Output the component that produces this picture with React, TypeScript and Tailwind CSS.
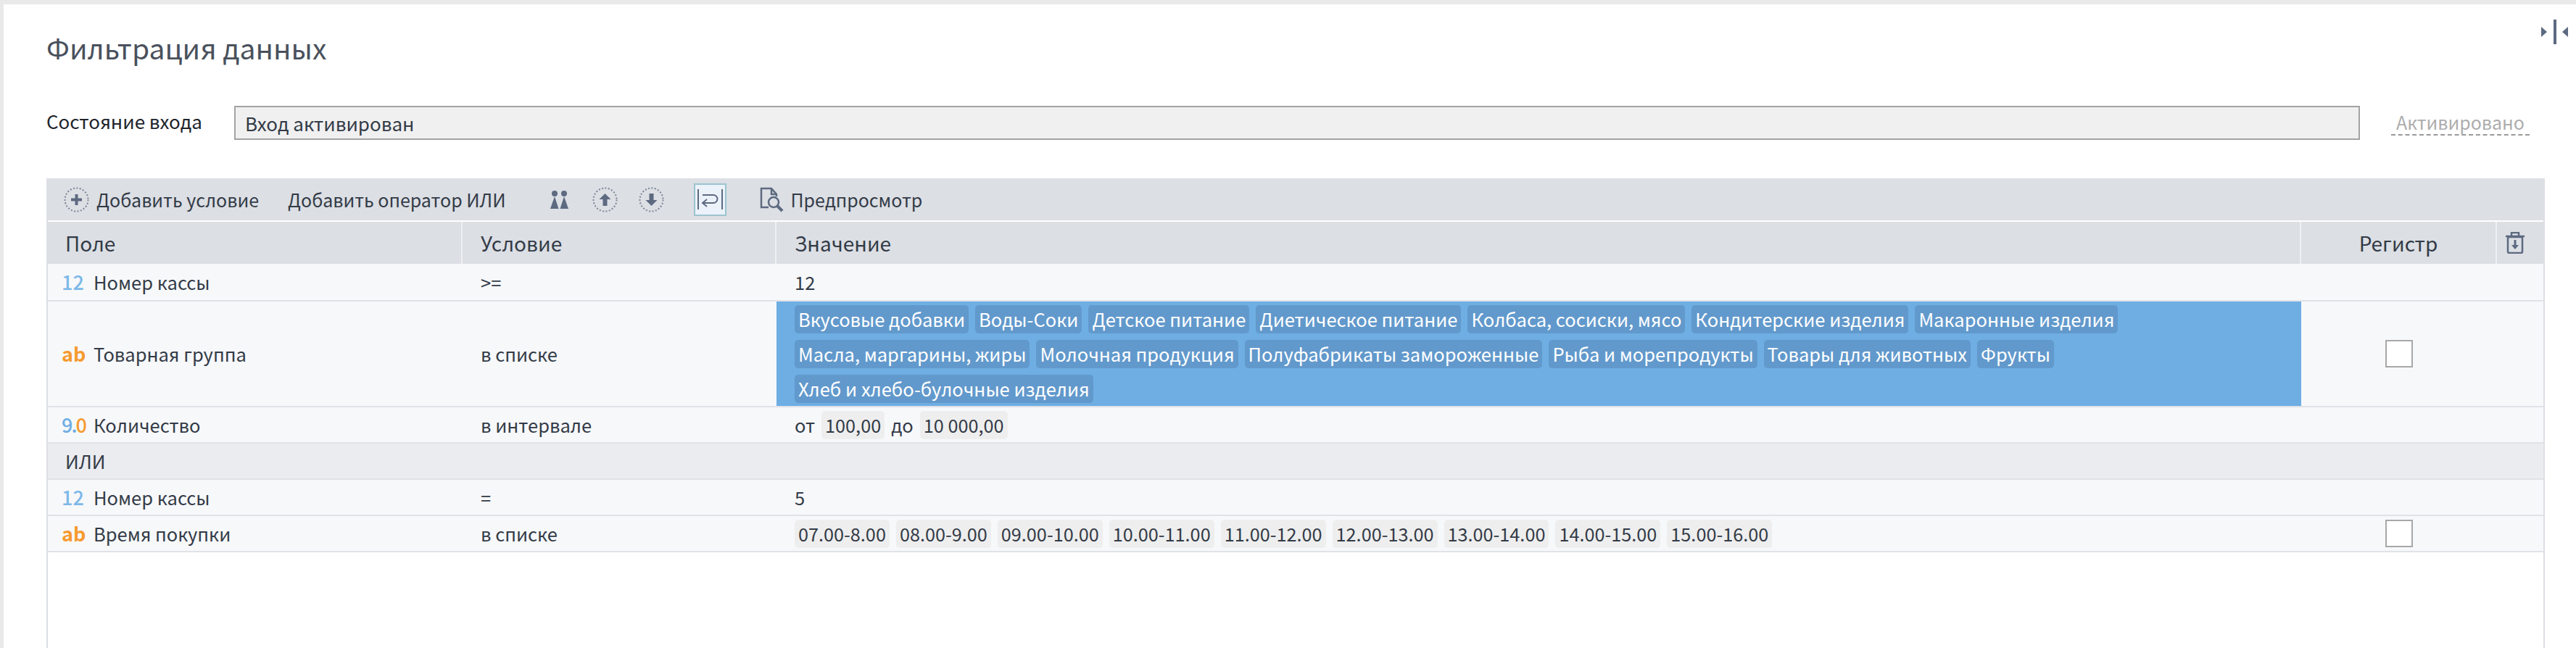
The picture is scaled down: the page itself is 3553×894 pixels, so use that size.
const font = { fontFamily: '"Noto Sans CJK SC", "Noto Sans", sans-serif' };

function Tag({ children, blue }: { children: React.ReactNode; blue?: boolean }) {
  return (
    <span className={"inline-flex h-[39px] items-center rounded-[5px] px-[5px] " + (blue ? "bg-[#6299cc] text-white" : "bg-[#eeeeee] text-[25.25px] text-[#333b47]")}>
      {children}
    </span>
  );
}

function DottedCircle({ children }: { children: React.ReactNode }) {
  return (
    <svg width="35" height="35" viewBox="0 0 35 35" className="shrink-0">
      <circle cx="17.5" cy="17.5" r="16" fill="none" stroke="#7d8797" strokeWidth="2" strokeDasharray="2 2.4" />
      {children}
    </svg>
  );
}

const ink = "#5d6a80";

function Toolbar() {
  return (
    <div className="flex h-[58px] items-center bg-[#dcdfe4] pl-[24px] text-[25px] text-[#333b47]">
      <DottedCircle>
        <path d="M17.5 10v15M10 17.5h15" stroke={ink} strokeWidth="4" />
      </DottedCircle>
      <span className="ml-[10px]">Добавить условие</span>
      <span className="ml-[40px]">Добавить оператор ИЛИ</span>
      <svg width="25" height="25" viewBox="0 0 25 25" className="ml-[61px] shrink-0">
        <circle cx="6" cy="4" r="4" fill={ink} />
        <circle cx="19" cy="4" r="4" fill={ink} />
        <path d="M6 8l5.500 17H0zM19 8l6 17H13.500z" fill={ink} />
      </svg>
      <div className="ml-[33px]">
        <DottedCircle>
          <path d="M17.5 9l8 8h-5v9h-6v-9h-5z" fill={ink} />
        </DottedCircle>
      </div>
      <div className="ml-[29px]">
        <DottedCircle>
          <path d="M17.5 26l-8-8h5V9h6v9h5z" fill={ink} />
        </DottedCircle>
      </div>
      <div className="ml-[41px] flex h-[45px] w-[45px] items-center justify-center border-2 border-[#9cc4cf] bg-[#ebf2fa]">
        <svg width="37" height="32" viewBox="0 0 37 32">
          <path d="M2 2v28M35 2v28" stroke={ink} strokeWidth="2" />
          <path d="M8 10h15a5.500 5.500 0 0 1 0 11H9M14 16l-6 5 6 5" fill="none" stroke={ink} strokeWidth="2" />
        </svg>
      </div>
      <svg width="33" height="35" viewBox="0 0 33 35" className="ml-[46px] shrink-0">
        <path d="M12 28H2V2h14l7 8v3M16 2v8h7" fill="none" stroke={ink} strokeWidth="2.500" />
        <circle cx="19" cy="21" r="7" fill="none" stroke={ink} strokeWidth="2.500" />
        <path d="M24 26l7 7" stroke={ink} strokeWidth="4" />
      </svg>
      <span className="ml-[10px]">Предпросмотр</span>
    </div>
  );
}

const cols = "grid grid-cols-[572px_433px_2103px_270px_64px]";

function Header() {
  const cell = "flex h-full items-center border-r-2 border-[#eef0f2]";
  return (
    <div className={cols + " h-[58px] bg-[#dcdfe4] mt-[2px] pl-[2px] text-[28px] text-[#333b47]"}>
      <div className={cell + " pl-[24px]"}>Поле</div>
      <div className={cell + " pl-[25px]"}>Условие</div>
      <div className={cell + " pl-[25px]"}>Значение</div>
      <div className={cell + " justify-center"}>Регистр</div>
      <div className="flex items-center pl-[12px]">
        <svg width="26" height="30" viewBox="0 0 26 30">
          <path d="M0 6h26M8 5V1h10v4" fill="none" stroke={ink} strokeWidth="2.500" />
          <rect x="3" y="7" width="20" height="22" rx="2" fill="none" stroke={ink} strokeWidth="2.500" />
          <path d="M13 11v9" stroke={ink} strokeWidth="3" />
          <path d="M8 18h10l-5 6z" fill={ink} />
        </svg>
      </div>
    </div>
  );
}

function TypeBadge({ t }: { t: string }) {
  if (t === "12") return <span className="w-[44px] text-[27px] font-medium text-[#7db8e8]">12</span>;
  if (t === "ab") return <span className="w-[44px] text-[27px] font-bold text-[#f59a2f]">ab</span>;
  return (
    <span className="w-[44px] text-[27px] font-medium tracking-[-2px] text-[#6eaee3]">
      9.<span className="text-[#f59a2f]">0</span>
    </span>
  );
}

function Row({ t, name, cond, h, children, check, valueClass }: { t: string; name: string; cond: string; h: string; children?: React.ReactNode; check?: boolean; valueClass?: string }) {
  return (
    <div className={cols + " " + h + " box-content border-b-2 border-[#e0e2e7] bg-[#f7f8fa] text-[#333b47]"}>
      <div className="flex items-center pl-[19px]">
        <TypeBadge t={t} />
        <span>{name}</span>
      </div>
      <div className="flex items-center pl-[25px]">{cond}</div>
      <div className={valueClass ?? "flex items-center gap-[9px] pl-[25px]"}>{children}</div>
      <div className="flex items-center justify-center">
        {check && <span className="box-border block h-[38px] w-[38px] border-2 border-[#a8a8a8] bg-white" />}
      </div>
      <div />
    </div>
  );
}

const groups = [
  ["Вкусовые добавки", "Воды-Соки", "Детское питание", "Диетическое питание", "Колбаса, сосиски, мясо", "Кондитерские изделия", "Макаронные изделия"],
  ["Масла, маргарины, жиры", "Молочная продукция", "Полуфабрикаты замороженные", "Рыба и морепродукты", "Товары для животных", "Фрукты"],
  ["Хлеб и хлебо-булочные изделия"],
];

const times = ["07.00-8.00", "08.00-9.00", "09.00-10.00", "10.00-11.00", "11.00-12.00", "12.00-13.00", "13.00-14.00", "14.00-15.00", "15.00-16.00"];

export default function App() {
  return (
    <div style={font} className="flex h-[894px] w-[3553px] flex-col overflow-hidden border-l-[5px] border-t-[6px] border-[#e9e9e9] bg-white text-[25.5px] leading-[34px]">
      <div className="relative flex flex-col pl-[59px] pr-[44px]">
        <h1 className="mt-[36px] h-[51px] text-[39px] leading-[46px] font-normal text-[#4a515c]">Фильтрация данных</h1>
        <svg width="38" height="34" viewBox="0 0 38 34" className="absolute right-[10px] top-[21px]">
          <path d="M0 10l8 7-8 7zM37 10l-8 7 8 7z" fill={ink} />
          <rect x="17" y="0" width="4" height="34" fill={ink} />
        </svg>
        <div className="mt-[53px] flex items-center text-[26px] text-[#20242b]">
          <span className="mb-[6px] w-[259px]">Состояние входа</span>
          <div className="flex h-[47px] w-[2932px] items-center border-2 border-[#a3a3a3] bg-[#f0f0f0] pl-[13px] text-[#333b47]">Вход активирован</div>
          <span className="mb-[2px] ml-[43px] border-b-2 border-dashed border-[#9a9a9a] px-[7px] text-[25px] text-[#adadad]">Активировано</span>
        </div>
        <div className="mt-[53px] w-[3446px] border-x-2 border-[#dcdfe4]">
          <div className="-mx-[2px]">
            <Toolbar />
            <Header />
          </div>
          <Row t="12" name="Номер кассы" cond=">=" h="h-[50px]"><span>12</span></Row>
          <Row t="ab" name="Товарная группа" cond="в списке" h="h-[144px]" check valueClass="flex flex-col justify-center gap-[9px] bg-[#6eaee3] pl-[25px]">
            {groups.map((g, i) => (
              <div key={i} className="flex gap-[9px]">
                {g.map((x) => <Tag key={x} blue>{x}</Tag>)}
              </div>
            ))}
          </Row>
          <Row t="9.0" name="Количество" cond="в интервале" h="h-[48px]">
            <span>от</span><Tag>100,00</Tag><span>до</span><Tag>10 000,00</Tag>
          </Row>
          <div className="flex h-[48px] box-content items-center border-b-2 border-[#e0e2e7] bg-[#ebecf0] pl-[24px] text-[#333b47]">ИЛИ</div>
          <Row t="12" name="Номер кассы" cond="=" h="h-[48px]"><span>5</span></Row>
          <Row t="ab" name="Время покупки" cond="в списке" h="h-[48px]" check>
            {times.map((x) => <Tag key={x}>{x}</Tag>)}
          </Row>
          <div className="h-[200px] bg-white" />
        </div>
      </div>
    </div>
  );
}
